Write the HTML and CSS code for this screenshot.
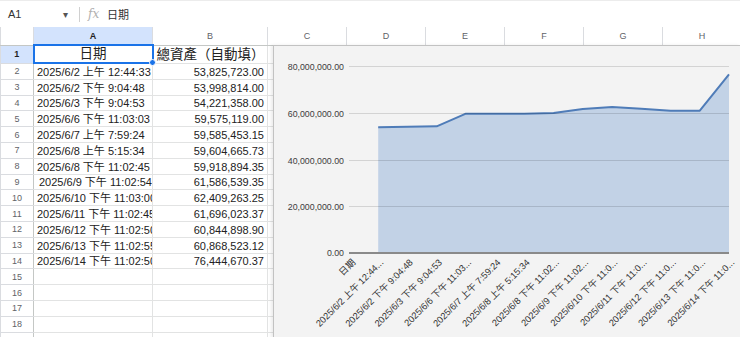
FILE: index.html
```html
<!DOCTYPE html>
<html>
<head>
  <title>總資產 - Sheet</title>
  <link rel="stylesheet" href="styles.css">
</head>
<body>
  <!-- Formula bar -->
  <div class="formula-bar">
    <div class="name-box">A1</div>
    <div class="name-arrow">&#9662;</div>
    <div class="divider"></div>
    <div class="fx">fx</div>
    <div class="formula">日期</div>
  </div>

  <!-- Grid -->
  <div class="sheet-wrap">
    <table class="sheet">
      <colgroup>
        <col class="c-rh"><col class="c-a"><col class="c-b">
        <col class="c-x"><col class="c-x"><col class="c-x"><col class="c-x"><col class="c-x"><col class="c-x">
      </colgroup>
      <thead>
        <tr>
          <th class="corner"></th>
          <th class="active">A</th><th>B</th><th>C</th><th>D</th><th>E</th><th>F</th><th>G</th><th>H</th>
        </tr>
      </thead>
      <tbody>
        <tr class="title-row">
          <th class="active">1</th>
          <td class="selected center">日期</td><td>總資產（自動填）</td><td></td><td></td><td></td><td></td><td></td><td></td>
        </tr>
        <tr><th>2</th><td>2025/6/2 上午 12:44:33</td><td class="num">53,825,723.00</td><td></td><td></td><td></td><td></td><td></td><td></td></tr>
        <tr><th>3</th><td>2025/6/2 下午 9:04:48</td><td class="num">53,998,814.00</td><td></td><td></td><td></td><td></td><td></td><td></td></tr>
        <tr><th>4</th><td>2025/6/3 下午 9:04:53</td><td class="num">54,221,358.00</td><td></td><td></td><td></td><td></td><td></td><td></td></tr>
        <tr><th>5</th><td>2025/6/6 下午 11:03:03</td><td class="num">59,575,119.00</td><td></td><td></td><td></td><td></td><td></td><td></td></tr>
        <tr><th>6</th><td>2025/6/7 上午 7:59:24</td><td class="num">59,585,453.15</td><td></td><td></td><td></td><td></td><td></td><td></td></tr>
        <tr><th>7</th><td>2025/6/8 上午 5:15:34</td><td class="num">59,604,665.73</td><td></td><td></td><td></td><td></td><td></td><td></td></tr>
        <tr><th>8</th><td>2025/6/8 下午 11:02:45</td><td class="num">59,918,894.35</td><td></td><td></td><td></td><td></td><td></td><td></td></tr>
        <tr><th>9</th><td class="indent">2025/6/9 下午 11:02:54</td><td class="num">61,586,539.35</td><td></td><td></td><td></td><td></td><td></td><td></td></tr>
        <tr><th>10</th><td>2025/6/10 下午 11:03:00</td><td class="num">62,409,263.25</td><td></td><td></td><td></td><td></td><td></td><td></td></tr>
        <tr><th>11</th><td>2025/6/11 下午 11:02:45</td><td class="num">61,696,023.37</td><td></td><td></td><td></td><td></td><td></td><td></td></tr>
        <tr><th>12</th><td>2025/6/12 下午 11:02:50</td><td class="num">60,844,898.90</td><td></td><td></td><td></td><td></td><td></td><td></td></tr>
        <tr><th>13</th><td>2025/6/13 下午 11:02:55</td><td class="num">60,868,523.12</td><td></td><td></td><td></td><td></td><td></td><td></td></tr>
        <tr><th>14</th><td>2025/6/14 下午 11:02:50</td><td class="num">76,444,670.37</td><td></td><td></td><td></td><td></td><td></td><td></td></tr>
        <tr><th>15</th><td></td><td></td><td></td><td></td><td></td><td></td><td></td><td></td></tr>
        <tr><th>16</th><td></td><td></td><td></td><td></td><td></td><td></td><td></td><td></td></tr>
        <tr><th>17</th><td></td><td></td><td></td><td></td><td></td><td></td><td></td><td></td></tr>
        <tr><th>18</th><td></td><td></td><td></td><td></td><td></td><td></td><td></td><td></td></tr>
        <tr><th>19</th><td></td><td></td><td></td><td></td><td></td><td></td><td></td><td></td></tr>
      </tbody>
    </table>

    <!-- Fill handle of the selected cell -->
    <div class="fill-handle"></div>

    <!-- Area chart floating over the grid -->
    <div class="chart">
      <svg width="467" height="292" viewBox="0 0 467 292">
        <!-- area + line -->
        <polygon class="area" points="104.2,207 104.2,81.2 133.5,80.8 162.7,80.3 191.9,67.7 221.2,67.7 250.4,67.7 279.6,66.9 308.8,63.0 338.1,61.1 367.3,62.8 396.5,64.8 425.8,64.7 455,28.3 455,207"/>
        <polyline class="line" points="104.2,81.2 133.5,80.8 162.7,80.3 191.9,67.7 221.2,67.7 250.4,67.7 279.6,66.9 308.8,63.0 338.1,61.1 367.3,62.8 396.5,64.8 425.8,64.7 455,28.3"/>

        <!-- gridlines -->
        <line class="grid" x1="75" y1="20.5" x2="455" y2="20.5"/>
        <line class="grid" x1="75" y1="67.5" x2="455" y2="67.5"/>
        <line class="grid" x1="75" y1="114.5" x2="455" y2="114.5"/>
        <line class="grid" x1="75" y1="160.5" x2="455" y2="160.5"/>
        <line class="baseline" x1="75" y1="207" x2="455" y2="207"/>

        <!-- y axis -->
        <text class="y-label" x="70" y="23.5">80,000,000.00</text>
        <text class="y-label" x="70" y="70.5">60,000,000.00</text>
        <text class="y-label" x="70" y="117.5">40,000,000.00</text>
        <text class="y-label" x="70" y="163.5">20,000,000.00</text>
        <text class="y-label" x="70" y="210">0.00</text>

        <!-- x axis -->
        <text class="x-label" transform="translate(82,217) rotate(-45)">日期</text>
        <text class="x-label" transform="translate(110,217) rotate(-45)">2025/6/2 上午 12:44...</text>
        <text class="x-label" transform="translate(139.5,217) rotate(-45)">2025/6/2 下午 9:04:48</text>
        <text class="x-label" transform="translate(168.7,217) rotate(-45)">2025/6/3 下午 9:04:53</text>
        <text class="x-label" transform="translate(197.9,217) rotate(-45)">2025/6/6 下午 11:03...</text>
        <text class="x-label" transform="translate(227.2,217) rotate(-45)">2025/6/7 上午 7:59:24</text>
        <text class="x-label" transform="translate(256.4,217) rotate(-45)">2025/6/8 上午 5:15:34</text>
        <text class="x-label" transform="translate(285.6,217) rotate(-45)">2025/6/8 下午 11:02...</text>
        <text class="x-label" transform="translate(314.8,217) rotate(-45)">2025/6/9 下午 11:02...</text>
        <text class="x-label" transform="translate(344.1,217) rotate(-45)">2025/6/10 下午 11:0...</text>
        <text class="x-label" transform="translate(373.3,217) rotate(-45)">2025/6/11 下午 11:0...</text>
        <text class="x-label" transform="translate(402.5,217) rotate(-45)">2025/6/12 下午 11:0...</text>
        <text class="x-label" transform="translate(431.8,217) rotate(-45)">2025/6/13 下午 11:0...</text>
        <text class="x-label" transform="translate(461,217) rotate(-45)">2025/6/14 下午 11:0...</text>
      </svg>
    </div>
  </div>
</body>
</html>
```

FILE: styles.css
```css
body {
  margin: 0;
  padding: 0;
  overflow: hidden;
  background-color: #fff;
  font-family: "Liberation Sans", Arial, "Noto Sans CJK TC", sans-serif;
  color: #222;
}

/* Formula bar */
.formula-bar {
  height: 26px;
  border-top: 1px solid #ececec;
  display: flex;
  align-items: center;
  font-size: 11px;
}

.name-box {
  width: 55px;
  padding-left: 8px;
  color: #333;
}

.name-arrow {
  font-size: 10px;
  color: #555;
  width: 16px;
}

.divider {
  width: 1px;
  height: 15px;
  background-color: #d0d0d0; /* Thin separator */
  margin-right: 8px;
}

.fx {
  font-family: "DejaVu Serif", serif;
  font-style: italic;
  font-size: 12px;
  color: #b0b0b0;
  width: 19px;
}

.formula {
  color: #333;
}

/* Grid */
.sheet-wrap {
  position: relative;
}

.sheet {
  border-collapse: collapse;
  table-layout: fixed;
  width: 741px;
}

.c-rh { width: 33px; }
.c-a { width: 119px; }
.c-b { width: 115px; }
.c-x { width: 79px; }

.sheet th {
  font-weight: normal;
  font-size: 9px;
  color: #5f6368;
  background-color: #fff;
  border: 1px solid #dadce0;
  padding: 0;
}

.sheet thead th {
  height: 17px;
  border-top: none;
  border-bottom: 1px solid #c4c7c5;
}

.sheet tbody th {
  border-right: 1px solid #c4c7c5;
}

.sheet th.active {
  background-color: #d3e3fd; /* Light blue header for active cell */
  color: #1f1f1f;
  font-weight: bold;
}

.sheet td {
  height: 14.8px;
  border: 1px solid #e2e3e3;
  padding: 0 3px;
  font-size: 11px;
  white-space: nowrap;
  overflow: hidden;
  vertical-align: bottom;
  line-height: 13px;
}

.title-row td {
  height: 16px;
  font-size: 13.5px;
  line-height: 16px;
}

.sheet td.center {
  text-align: center;
}

.sheet td.num {
  text-align: right;
}

.sheet td.indent {
  padding-left: 5px;
}

.sheet td.selected {
  border: 2px solid #1a73e8; /* Selected cell outline */
}

.fill-handle {
  position: absolute;
  left: 149px;
  top: 32px;
  width: 5px;
  height: 5px;
  border-radius: 50%;
  background-color: #1a73e8;
  border: 1px solid #fff;
}

/* Chart */
.chart {
  position: absolute;
  left: 273px;
  top: 18px;
  width: 467px;
  height: 291px;
  background-color: #f3f3f3;
  border-top: 1px solid #c2c2c2;
  border-left: 1px solid #c2c2c2;
  border-bottom: 1px solid #c2c2c2;
  box-shadow: -2px 0 3px rgba(0, 0, 0, 0.08);
  overflow: hidden;
}

.chart svg {
  display: block;
  font-family: "Liberation Sans", Arial, "Noto Sans CJK TC", sans-serif;
}

.area {
  fill: #c2d2e6;
}

.line {
  fill: none;
  stroke: #4f7cb8;
  stroke-width: 2;
  stroke-linejoin: round;
}

.grid {
  stroke: rgba(0, 0, 0, 0.13);
  stroke-width: 1;
}

.baseline {
  stroke: #8a8a8a;
  stroke-width: 2;
}

.y-label {
  font-size: 8.8px;
  fill: #3c3c3c;
  text-anchor: end;
}

.x-label {
  font-size: 9.3px;
  fill: #333;
  text-anchor: end;
}
```
